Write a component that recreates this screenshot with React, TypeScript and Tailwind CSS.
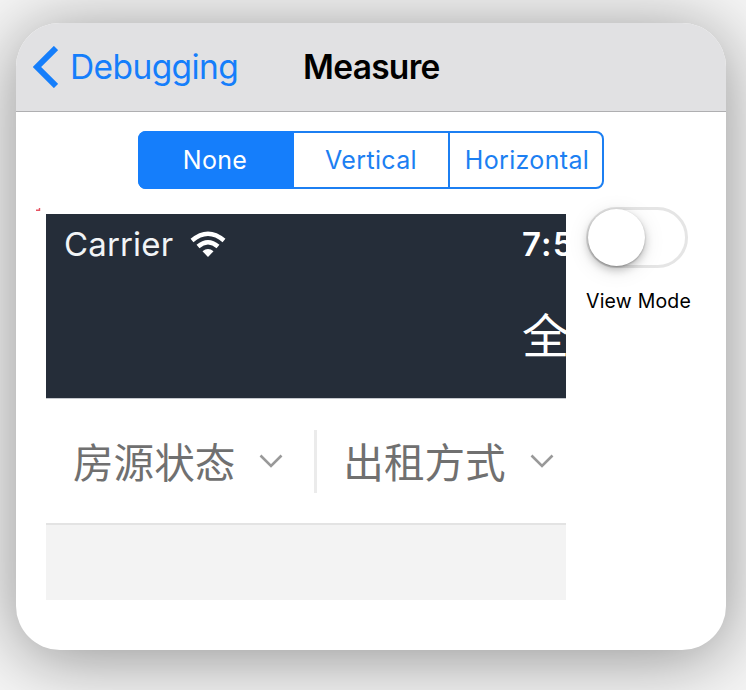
function ChevronDown() {
  return (
    <svg className="h-[14px] w-6 shrink-0" viewBox="0 0 24 14" fill="none" stroke="#999" strokeWidth="2.6">
      <path d="M1.5 1.5 12 12 22.5 1.5" />
    </svg>
  );
}

function Filter({ label }: { label: string }) {
  return (
    <div className="flex shrink-0 items-center gap-[24px]">
      <span className="whitespace-nowrap font-['Noto_Sans_CJK_SC',sans-serif] text-[40.6px] leading-[60px] font-normal text-[#707070]">{label}</span>
      <ChevronDown />
    </div>
  );
}

export default function App() {
  return (
    <div className="h-[690px] w-[746px] overflow-hidden bg-[#f5f5f5] px-4 pt-[23px] font-['Inter',sans-serif]">
      <main className="h-[627px] w-[710px] rounded-[44px] bg-white shadow-[0_8px_70px_rgba(0,0,0,0.41)]">
        <header className="flex h-[89px] items-center rounded-t-[44px] border-b border-[#afafb1] bg-[#e1e1e3] pl-[17px]">
          <svg className="h-[42px] w-[25px]" viewBox="0 0 25 42" fill="none" stroke="#157efb" strokeWidth="6">
            <path d="M23 2 4 21 23 40" />
          </svg>
          <span className="ml-[12px] w-[233px] text-[33.5px] leading-10 tracking-[-0.6px] text-[#157efb]">Debugging</span>
          <h1 className="text-[33.5px] leading-10 font-semibold tracking-[-0.7px] text-black">Measure</h1>
        </header>
        <div className="mt-[19px] ml-[122px] flex h-[58px] w-[466px] rounded-[8px] border-2 border-[#1c7ff2] text-[25px] tracking-[0.35px] text-[#1c7ff2]">
          <div className="-my-0.5 -ml-0.5 flex w-[156px] items-center justify-center rounded-l-[8px] bg-[#157efb] pt-px pr-0.5 text-white">None</div>
          <div className="flex w-[156px] items-center justify-center border-r-2 border-[#1c7ff2] pt-px">Vertical</div>
          <div className="flex flex-1 items-center justify-center pt-px pl-0.5">Horizontal</div>
        </div>
        <div className="flex pt-[18px] pl-5">
          <svg className="h-[5px] w-[6px]" viewBox="0 0 6 5" fill="none" stroke="#e65362" strokeWidth="1.4">
            <path d="M0 3.3H3.5V1" />
          </svg>
          <section className="mt-[7px] ml-1 h-[386px] w-[520px] shrink-0 overflow-hidden bg-[#f3f3f3]">
            <div className="h-[185px] border-b border-[#c5c8ce] bg-[#252d39] text-white">
              <div className="flex h-[60px] items-center pl-[18px]">
                <span className="w-[126px] shrink-0 text-[33px] leading-10 font-normal tracking-[0.15px] text-[#f2f4f6]">Carrier</span>
                <svg className="h-[28px] w-[36px] shrink-0" viewBox="0 0 36 28" fill="none" stroke="white" strokeWidth="4.5">
                  <path d="M2 10.5Q18-3 34 10.5" />
                  <path d="M8 16.5Q18 8 28 16.5" />
                  <path d="M18 27 12.5 21.3Q18 16.8 23.5 21.3Z" fill="white" stroke="none" />
                </svg>
                <span className="ml-[296px] shrink-0 text-[33px] leading-10 font-semibold tracking-[1.2px] whitespace-nowrap">7:5</span>
              </div>
              <div className="pt-[29px] pl-[476px] font-['Noto_Sans_CJK_SC',sans-serif] text-[47px] leading-[60px] font-normal whitespace-nowrap">全</div>
            </div>
            <div className="flex h-[126px] items-center border-b-2 border-[#e3e3e3] bg-white pl-[27px]">
              <Filter label="房源状态" />
              <div className="mr-[26px] ml-[31px] h-[63px] w-[3px] shrink-0 bg-[#ebebeb]" />
              <Filter label="出租方式" />
            </div>
          </section>
          <aside className="ml-5 w-[120px]">
            <div className="h-[61px] w-[102px] rounded-full border-[3px] border-[#e5e5e5] bg-white">
              <div className="-mt-px -ml-px size-[57px] rounded-full bg-white shadow-[0_4px_8px_rgba(0,0,0,0.22),0_1px_2px_rgba(0,0,0,0.25),0_4px_22px_rgba(0,0,0,0.1)]" />
            </div>
            <div className="mt-[21px] text-[19.5px] leading-6 tracking-[0.2px] whitespace-nowrap text-black">View Mode</div>
          </aside>
        </div>
      </main>
    </div>
  );
}
